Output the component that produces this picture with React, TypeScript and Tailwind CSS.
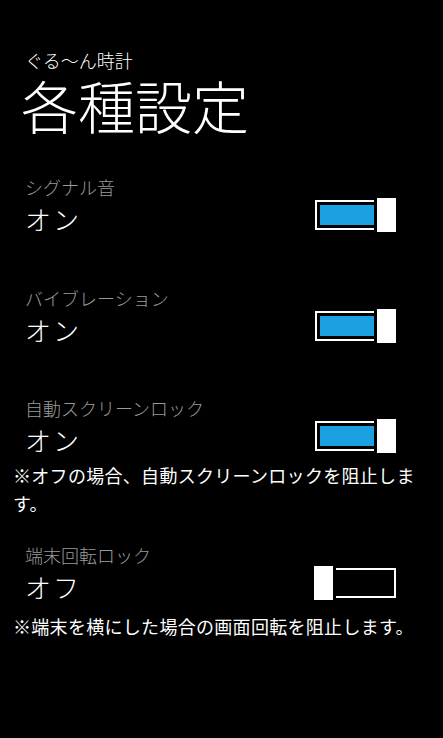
const font = { fontFamily: '"Noto Sans CJK JP", "Noto Sans", sans-serif' };

function Toggle({ on }: { on: boolean }) {
  return (
    <div className="relative w-[88px] h-[40px] shrink-0">
      <div className="absolute left-[4px] top-[5px] w-[81px] h-[30px] border-2 border-white p-[3px]">
        {on && <div className="w-full h-full bg-[#1ba1e2]" />}
      </div>
      <div
        className={
          on
            ? 'absolute right-0 top-0 w-[25px] h-[40px] border-[3px] border-black bg-white'
            : 'absolute left-0 top-0 w-[25px] h-[40px] border-[3px] border-black bg-white'
        }
      />
    </div>
  );
}

function Setting({
  label,
  on,
  note,
  noteClass = '',
  className = '',
}: {
  label: string;
  on: boolean;
  note?: string;
  noteClass?: string;
  className?: string;
}) {
  return (
    <section className={className}>
      <p className="pl-[25px] text-[18px] leading-[24px] font-light text-[#9a9a9a]">{label}</p>
      <div className="-mt-[4px] h-[40px] flex items-start justify-between pr-[44px]">
        <span className="pl-[25px] pt-[8px] text-[26px] leading-[32px] tracking-[2px] font-light text-white">
          {on ? 'オン' : 'オフ'}
        </span>
        <Toggle on={on} />
      </div>
      {note && (
        <p className={`pl-[13px] pr-[25px] text-[18px] leading-[28px] tracking-[0.3px] text-white ${noteClass}`}>
          {note}
        </p>
      )}
    </section>
  );
}

export default function App() {
  return (
    <div className="w-full h-[738px] bg-black text-white overflow-hidden" style={font}>
      <header className="pt-[48px]">
        <p className="pl-[25px] text-[18px] leading-[24px] font-light">ぐる〜ん時計</p>
        <h1 className="pl-[21px] text-[57px] leading-[64px] font-light">各種設定</h1>
      </header>
      <div className="mt-[39px]">
        <Setting label="シグナル音" on className="mb-[51px]" />
        <Setting label="バイブレーション" on className="mb-[50px]" />
        <Setting
          label="自動スクリーンロック"
          on
          note="※オフの場合、自動スクリーンロックを阻止します。"
          noteClass="mt-[5px]"
          className="mb-[26px]"
        />
        <Setting
          label="端末回転ロック"
          on={false}
          note="※端末を横にした場合の画面回転を阻止します。"
          noteClass="mt-[9px]"
        />
      </div>
    </div>
  );
}
